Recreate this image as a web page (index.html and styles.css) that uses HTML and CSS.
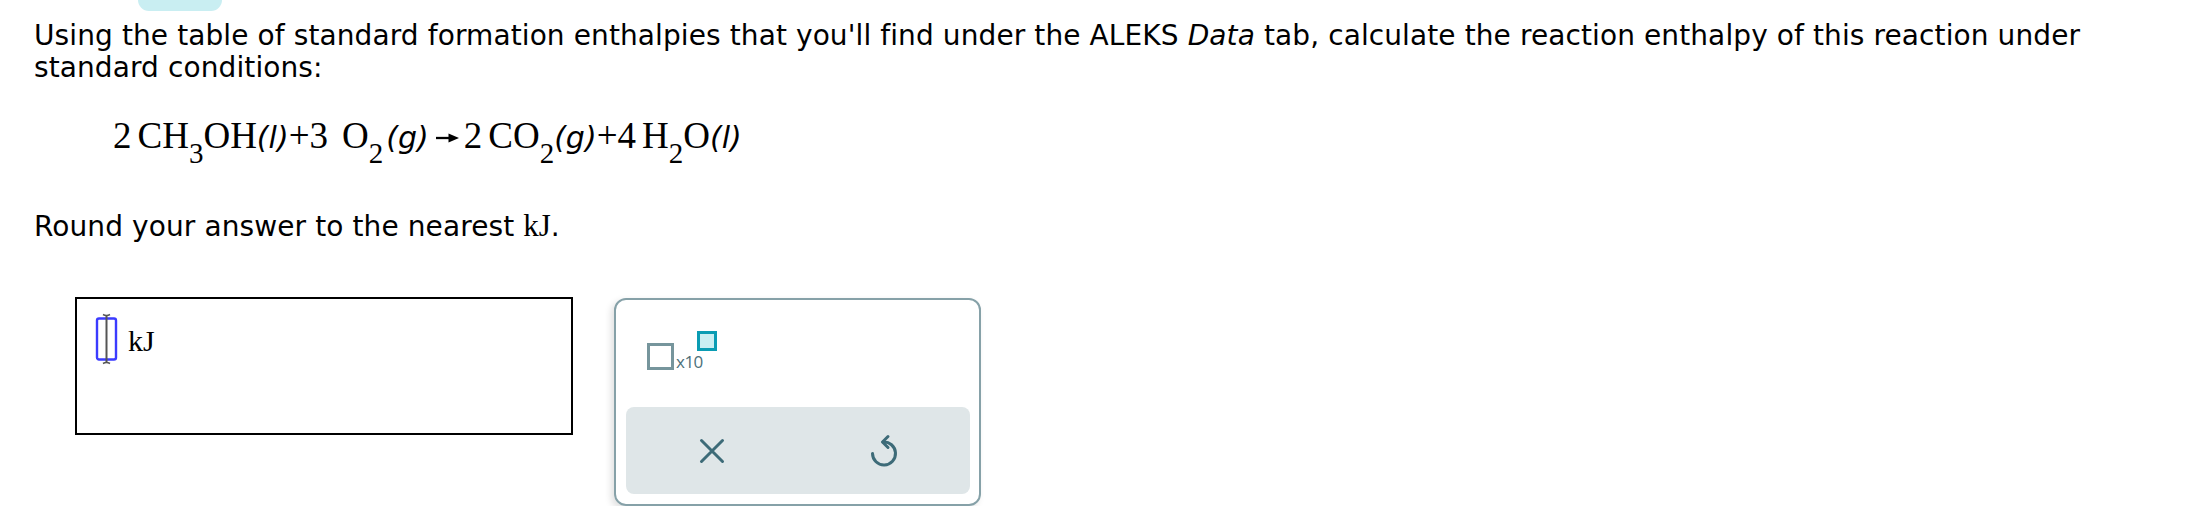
FILE: index.html
```html
<!DOCTYPE html>
<html>
<head>
<meta charset="utf-8">
<link rel="stylesheet" href="styles.css">
</head>
<body>
<div class="page">
  <div class="tab"></div>
  <p class="prompt">Using the table of standard formation enthalpies that you'll find under the ALEKS <i>Data</i> tab, calculate the reaction enthalpy of this reaction under standard conditions:</p>
  <div class="eq"><span class="coef">2</span><span>CH</span><span class="sub">3</span><span>OH</span><span class="st">(<i>l</i>)</span><span>+</span><span class="coef coef-wide">3</span><span>O</span><span class="sub">2</span><span class="st st-gap">(<i>g</i>)</span><svg class="arrow" width="23" height="12" viewBox="0 0 23 12"><line x1="0" y1="6" x2="14" y2="6" stroke="#000" stroke-width="2.3"/><polygon points="12.5,1.6 23,6 12.5,10.4" fill="#000"/></svg><span class="coef">2</span><span>CO</span><span class="sub">2</span><span class="st">(<i>g</i>)</span><span>+</span><span class="coef">4</span><span>H</span><span class="sub">2</span><span>O</span><span class="st">(<i>l</i>)</span></div>
  <p class="prompt round">Round your answer to the nearest <span class="unit">kJ</span>.</p>
  <div class="answer-row">
    <div class="answer-box">
      <svg class="cursor" width="24" height="52" viewBox="0 0 24 52">
        <rect x="2" y="5.5" width="19" height="41" rx="2" fill="none" stroke="#3b3bff" stroke-width="2.4"/>
        <line x1="11.5" y1="2" x2="11.5" y2="50" stroke="#555" stroke-width="2"/>
        <path d="M8 1.5 Q11.5 3.5 15 1.5 M8 50.5 Q11.5 48.5 15 50.5" fill="none" stroke="#555" stroke-width="1.6"/>
      </svg>
      <span class="kj">kJ</span>
    </div>
    <div class="panel">
      <div class="sci">
        <span class="sq-big"></span>
        <span class="x10">x10</span>
        <span class="sq-small"></span>
      </div>
      <div class="actions">
        <div class="act">
          <svg width="26" height="26" viewBox="0 0 26 26"><path d="M2.5 2.5 L23.5 23.5 M23.5 2.5 L2.5 23.5" stroke="#3d6b78" stroke-width="3" stroke-linecap="round" fill="none"/></svg>
        </div>
        <div class="act">
          <svg width="30" height="36" viewBox="0 0 30 36"><path d="M14 9 A11.5 11.5 0 1 1 3.5 20.5" stroke="#3d6b78" stroke-width="3" stroke-linecap="round" fill="none"/><path d="M19 3.5 L13.5 9 L19 14.5" stroke="#3d6b78" stroke-width="3" stroke-linecap="round" stroke-linejoin="round" fill="none"/></svg>
        </div>
      </div>
    </div>
  </div>
</div>
</body>
</html>
```

FILE: styles.css
```css
html, body {
  margin: 0;
  padding: 0;
  background: #fff;
}

.page {
  font-family: "DejaVu Sans", Verdana, sans-serif;
  color: #000;
}

.tab {
  margin-left: 138px;
  width: 84px;
  height: 11px;
  background: #c9eef2;
  border-radius: 0 0 14px 14px;
}

.prompt {
  margin: 9px 0 0 0;
  padding: 0 34px;
  font-size: 28px;
  letter-spacing: 0.1px;
  line-height: 32px;
}

.prompt i {
  font-style: italic;
}

.eq {
  margin-top: 32px;
  padding-left: 113px;
  height: 40px;
  font-family: "Liberation Serif", "Times New Roman", serif;
  font-size: 37px;
  line-height: 40px;
  white-space: nowrap;
  display: flex;
  align-items: baseline;
}

.coef {
  margin-right: 6px;
}

.coef-wide {
  margin-right: 14px;
}

.sub {
  font-size: 29px;
  line-height: 0;
  position: relative;
  top: 15px;
}

.st {
  font-family: "DejaVu Sans", Verdana, sans-serif;
  font-style: italic;
  font-size: 30px;
}

.st-gap {
  margin-left: 3px;
}

.arrow {
  margin: 0 5px 0 7px;
  align-self: center;
  position: relative;
  top: 2px;
}

.round {
  margin-top: 54px;
}

.unit {
  font-family: "Liberation Serif", "Times New Roman", serif;
  font-size: 31px;
  letter-spacing: 0;
}

.answer-row {
  margin-top: 54px;
  padding-left: 75px;
  display: flex;
  align-items: flex-start;
  gap: 41px;
}

.answer-box {
  box-sizing: border-box;
  width: 498px;
  height: 138px;
  border: 2px solid #000;
  padding: 14px 0 0 19px;
  display: flex;
  align-items: flex-start;
}

.cursor {
  display: block;
  margin-left: -1px;
}

.kj {
  font-family: "Liberation Serif", "Times New Roman", serif;
  font-size: 30px;
  line-height: 30px;
  margin-left: 9px;
  margin-top: 13px;
}

.panel {
  box-sizing: border-box;
  margin-top: 1px;
  width: 367px;
  height: 208px;
  border: 2px solid #86a1a8;
  border-radius: 12px;
  box-shadow: -3px 3px 7px rgba(0, 0, 0, 0.12);
  display: flex;
  flex-direction: column;
}

.sci {
  display: flex;
  align-items: flex-start;
  margin: 31px 0 0 31px;
}

.sq-big {
  box-sizing: border-box;
  width: 27px;
  height: 27px;
  border: 3px solid #76959c;
  margin-top: 12px;
}

.x10 {
  font-family: "Open Sans", "Noto Sans", sans-serif;
  font-size: 17px;
  line-height: 17px;
  color: #4c707a;
  margin-left: 2px;
  margin-top: 22px;
  letter-spacing: -0.5px;
}

.sq-small {
  box-sizing: border-box;
  width: 20px;
  height: 20px;
  border: 3px solid #0a9cb3;
  background: #c9eef2;
  margin-left: -6px;
}

.actions {
  margin: auto 9px 10px 10px;
  height: 87px;
  background: #dfe6e8;
  border-radius: 8px;
  display: flex;
}

.act {
  flex: 1;
  display: flex;
  align-items: center;
  justify-content: center;
}

.act svg {
  display: block;
}
```
